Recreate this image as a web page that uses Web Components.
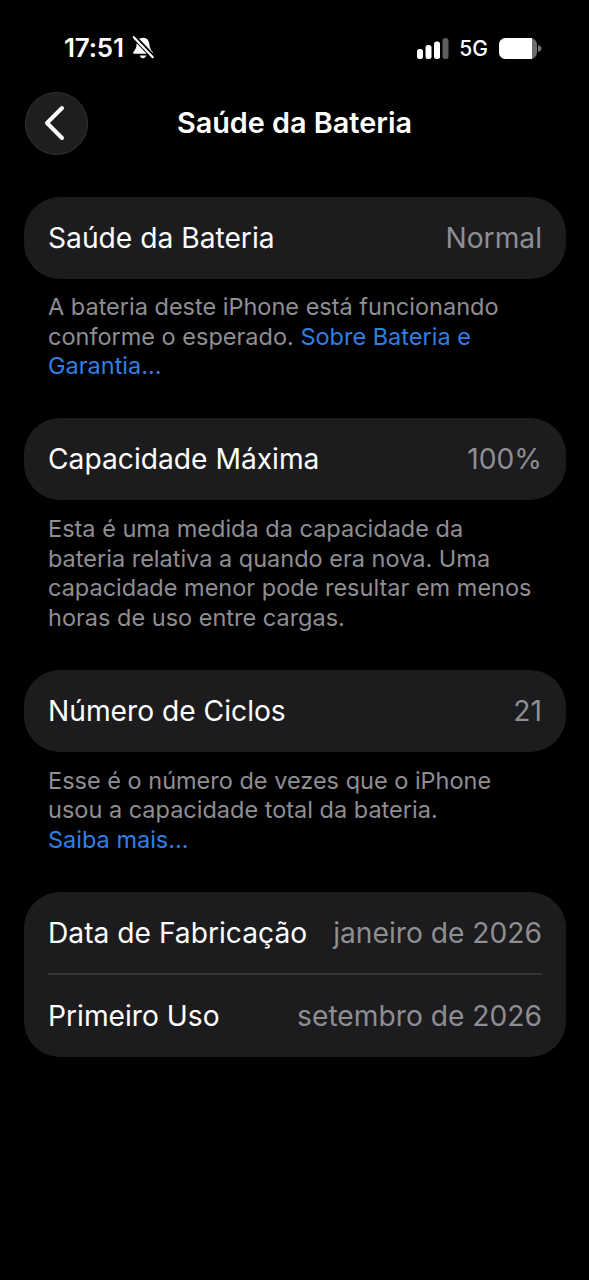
<!DOCTYPE html>
<html lang="pt-BR">
<head>
<meta charset="utf-8">
<title>Saúde da Bateria</title>
<style>
    html, body { margin: 0; background: #000; }
    body { width: 589px; height: 1280px; overflow: hidden; font-family: Inter, "Liberation Sans", sans-serif; color: #fff; }
    main { display: flex; flex-direction: column; padding: 0 23px 0 24px; }
</style>
</head>
<body>
<status-bar></status-bar>
<nav-bar>Saúde da Bateria</nav-bar>
<main>
    <list-card>
        <list-row label="Saúde da Bateria" value="Normal"></list-row>
    </list-card>
    <foot-note style="--before: 13px; --after: 37.500px">A bateria deste iPhone está funcionando<br>conforme o esperado. <a>Sobre Bateria e<br>Garantia...</a></foot-note>
    <list-card>
        <list-row label="Capacidade Máxima" value="100%"></list-row>
    </list-card>
    <foot-note style="--before: 14px; --after: 38px">Esta é uma medida da capacidade da<br>bateria relativa a quando era nova. Uma<br>capacidade menor pode resultar em menos<br>horas de uso entre cargas.</foot-note>
    <list-card>
        <list-row label="Número de Ciclos" value="21"></list-row>
    </list-card>
    <foot-note style="--before: 13.500px; --after: 38px">Esse é o número de vezes que o iPhone<br>usou a capacidade total da bateria.<br><a>Saiba mais...</a></foot-note>
    <list-card>
        <list-row label="Data de Fabricação" value="janeiro de 2026"></list-row>
        <list-row label="Primeiro Uso" value="setembro de 2026" divided></list-row>
    </list-card>
</main>
<script>
const statusTemplate = document.createElement("template");
statusTemplate.innerHTML = `
    <style>
        :host { display: flex; justify-content: space-between; align-items: center; height: 48px; padding: 24px 47px 0 64px; box-sizing: content-box; }
        .left, .right { display: flex; align-items: center; }
        .time { font: 600 26px/1 Inter, "Liberation Sans", sans-serif; letter-spacing: -0.2px; }
        .left svg { margin-left: 6px; }
        .net { font: 500 21px/1 Inter, "Liberation Sans", sans-serif; margin: 0 11px 0 10px; }
    </style>
    <div class="left">
        <span class="time">17:51</span>
        <svg width="26" height="26" viewBox="0 0 24 24">
            <path d="M12 2.500c-3.600 0-5.600 2.600-5.900 6-.3 3.300-1 5-3 7.200-.5.600-.2 1.500.6 1.500h16.600c.8 0 1.100-.9.600-1.500-2-2.200-2.700-3.900-3-7.200-.3-3.400-2.300-6-5.900-6z" fill="#fff"/>
            <path d="M9 19h6c-.3 1.500-1.500 2.500-3 2.500s-2.700-1-3-2.500z" fill="#fff"/>
            <path d="M3.500 1.500 21.500 20.500" stroke="#000" stroke-width="4.500"/>
            <path d="M3.500 2 21 20.500" stroke="#fff" stroke-width="2" stroke-linecap="round"/>
        </svg>
    </div>
    <div class="right">
        <svg width="32" height="21" viewBox="0 0 32 21">
            <rect x="0" y="11" width="6" height="10" rx="2.500" fill="#fff"/>
            <rect x="8.500" y="7" width="6" height="14" rx="2.500" fill="#fff"/>
            <rect x="17" y="3.500" width="6" height="17.500" rx="2.500" fill="#fff"/>
            <rect x="25.500" y="0" width="6" height="21" rx="2.500" fill="#5c5c5c"/>
        </svg>
        <span class="net">5G</span>
        <svg width="43" height="21" viewBox="0 0 43 21">
            <rect x="0" y="0" width="38" height="21" rx="6.500" fill="#6e6e6e"/>
            <path d="M6.500 0H33v21H6.500A6.500 6.500 0 0 1 0 14.500v-8A6.500 6.500 0 0 1 6.500 0z" fill="#fff"/>
            <path d="M39 7c2 .5 3.500 1.800 3.500 3.500S41 13.500 39 14z" fill="#6e6e6e"/>
        </svg>
    </div>
`;

class StatusBar extends HTMLElement {
    constructor() {
        super();
        this.attachShadow({ mode: "open" });
        this.shadowRoot.appendChild(statusTemplate.content.cloneNode(true));
    }
}

const navTemplate = document.createElement("template");
navTemplate.innerHTML = `
    <style>
        :host { display: flex; align-items: center; height: 64px; margin: 19px 0 42px; padding-left: 25px; }
        .back { display: flex; align-items: center; justify-content: center; width: 63px; height: 63px; box-sizing: border-box; border-radius: 50%; background: #1e1e20; border: 1px solid #333335; }
        .back svg { margin-left: -6px; }
        .title { flex: 1; text-align: center; margin-right: 63px; padding-right: 25px; font: 600 28.800px/1 Inter, "Liberation Sans", sans-serif; }
    </style>
    <div class="back">
        <svg width="24" height="36" viewBox="0 0 24 36" fill="none">
            <path d="M20 3 5 18l15 15" stroke="#fff" stroke-width="4" stroke-linecap="round" stroke-linejoin="round"/>
        </svg>
    </div>
    <div class="title"><slot></slot></div>
`;

class NavBar extends HTMLElement {
    constructor() {
        super();
        this.attachShadow({ mode: "open" });
        this.shadowRoot.appendChild(navTemplate.content.cloneNode(true));
    }
}

const cardTemplate = document.createElement("template");
cardTemplate.innerHTML = `
    <style>
        :host { display: flex; flex-direction: column; border-radius: 36px; background: #1c1c1e; padding: 0 24px; }
    </style>
    <slot></slot>
`;

class ListCard extends HTMLElement {
    constructor() {
        super();
        this.attachShadow({ mode: "open" });
        this.shadowRoot.appendChild(cardTemplate.content.cloneNode(true));
    }
}

const rowTemplate = document.createElement("template");
rowTemplate.innerHTML = `
    <style>
        :host { display: flex; justify-content: space-between; align-items: center; height: 82px; font: 400 28.200px/1 Inter, "Liberation Sans", sans-serif; }
        :host([divided]) { border-top: 2px solid #333335; margin-top: -1px; }
        .label, .value { position: relative; top: 0.500px; }
        .value { color: #8e8e93; }
    </style>
    <span class="label"></span>
    <span class="value"></span>
`;

class ListRow extends HTMLElement {
    constructor() {
        super();
        this.attachShadow({ mode: "open" });
        this.shadowRoot.appendChild(rowTemplate.content.cloneNode(true));
    }
    connectedCallback() {
        this.shadowRoot.querySelector(".label").textContent = this.getAttribute("label");
        this.shadowRoot.querySelector(".value").textContent = this.getAttribute("value");
    }
}

const noteTemplate = document.createElement("template");
noteTemplate.innerHTML = `
    <style>
        :host { display: block; padding: var(--before, 14px) 24px 0; margin-bottom: var(--after, 37px); font: 400 23.500px/29.500px Inter, "Liberation Sans", sans-serif; color: #8e8e93; }
        ::slotted(a) { color: #2f7fe6; }
    </style>
    <slot></slot>
`;

class FootNote extends HTMLElement {
    constructor() {
        super();
        this.attachShadow({ mode: "open" });
        this.shadowRoot.appendChild(noteTemplate.content.cloneNode(true));
    }
}

window.customElements.define("status-bar", StatusBar);
window.customElements.define("nav-bar", NavBar);
window.customElements.define("list-card", ListCard);
window.customElements.define("list-row", ListRow);
window.customElements.define("foot-note", FootNote);
</script>
</body>
</html>
